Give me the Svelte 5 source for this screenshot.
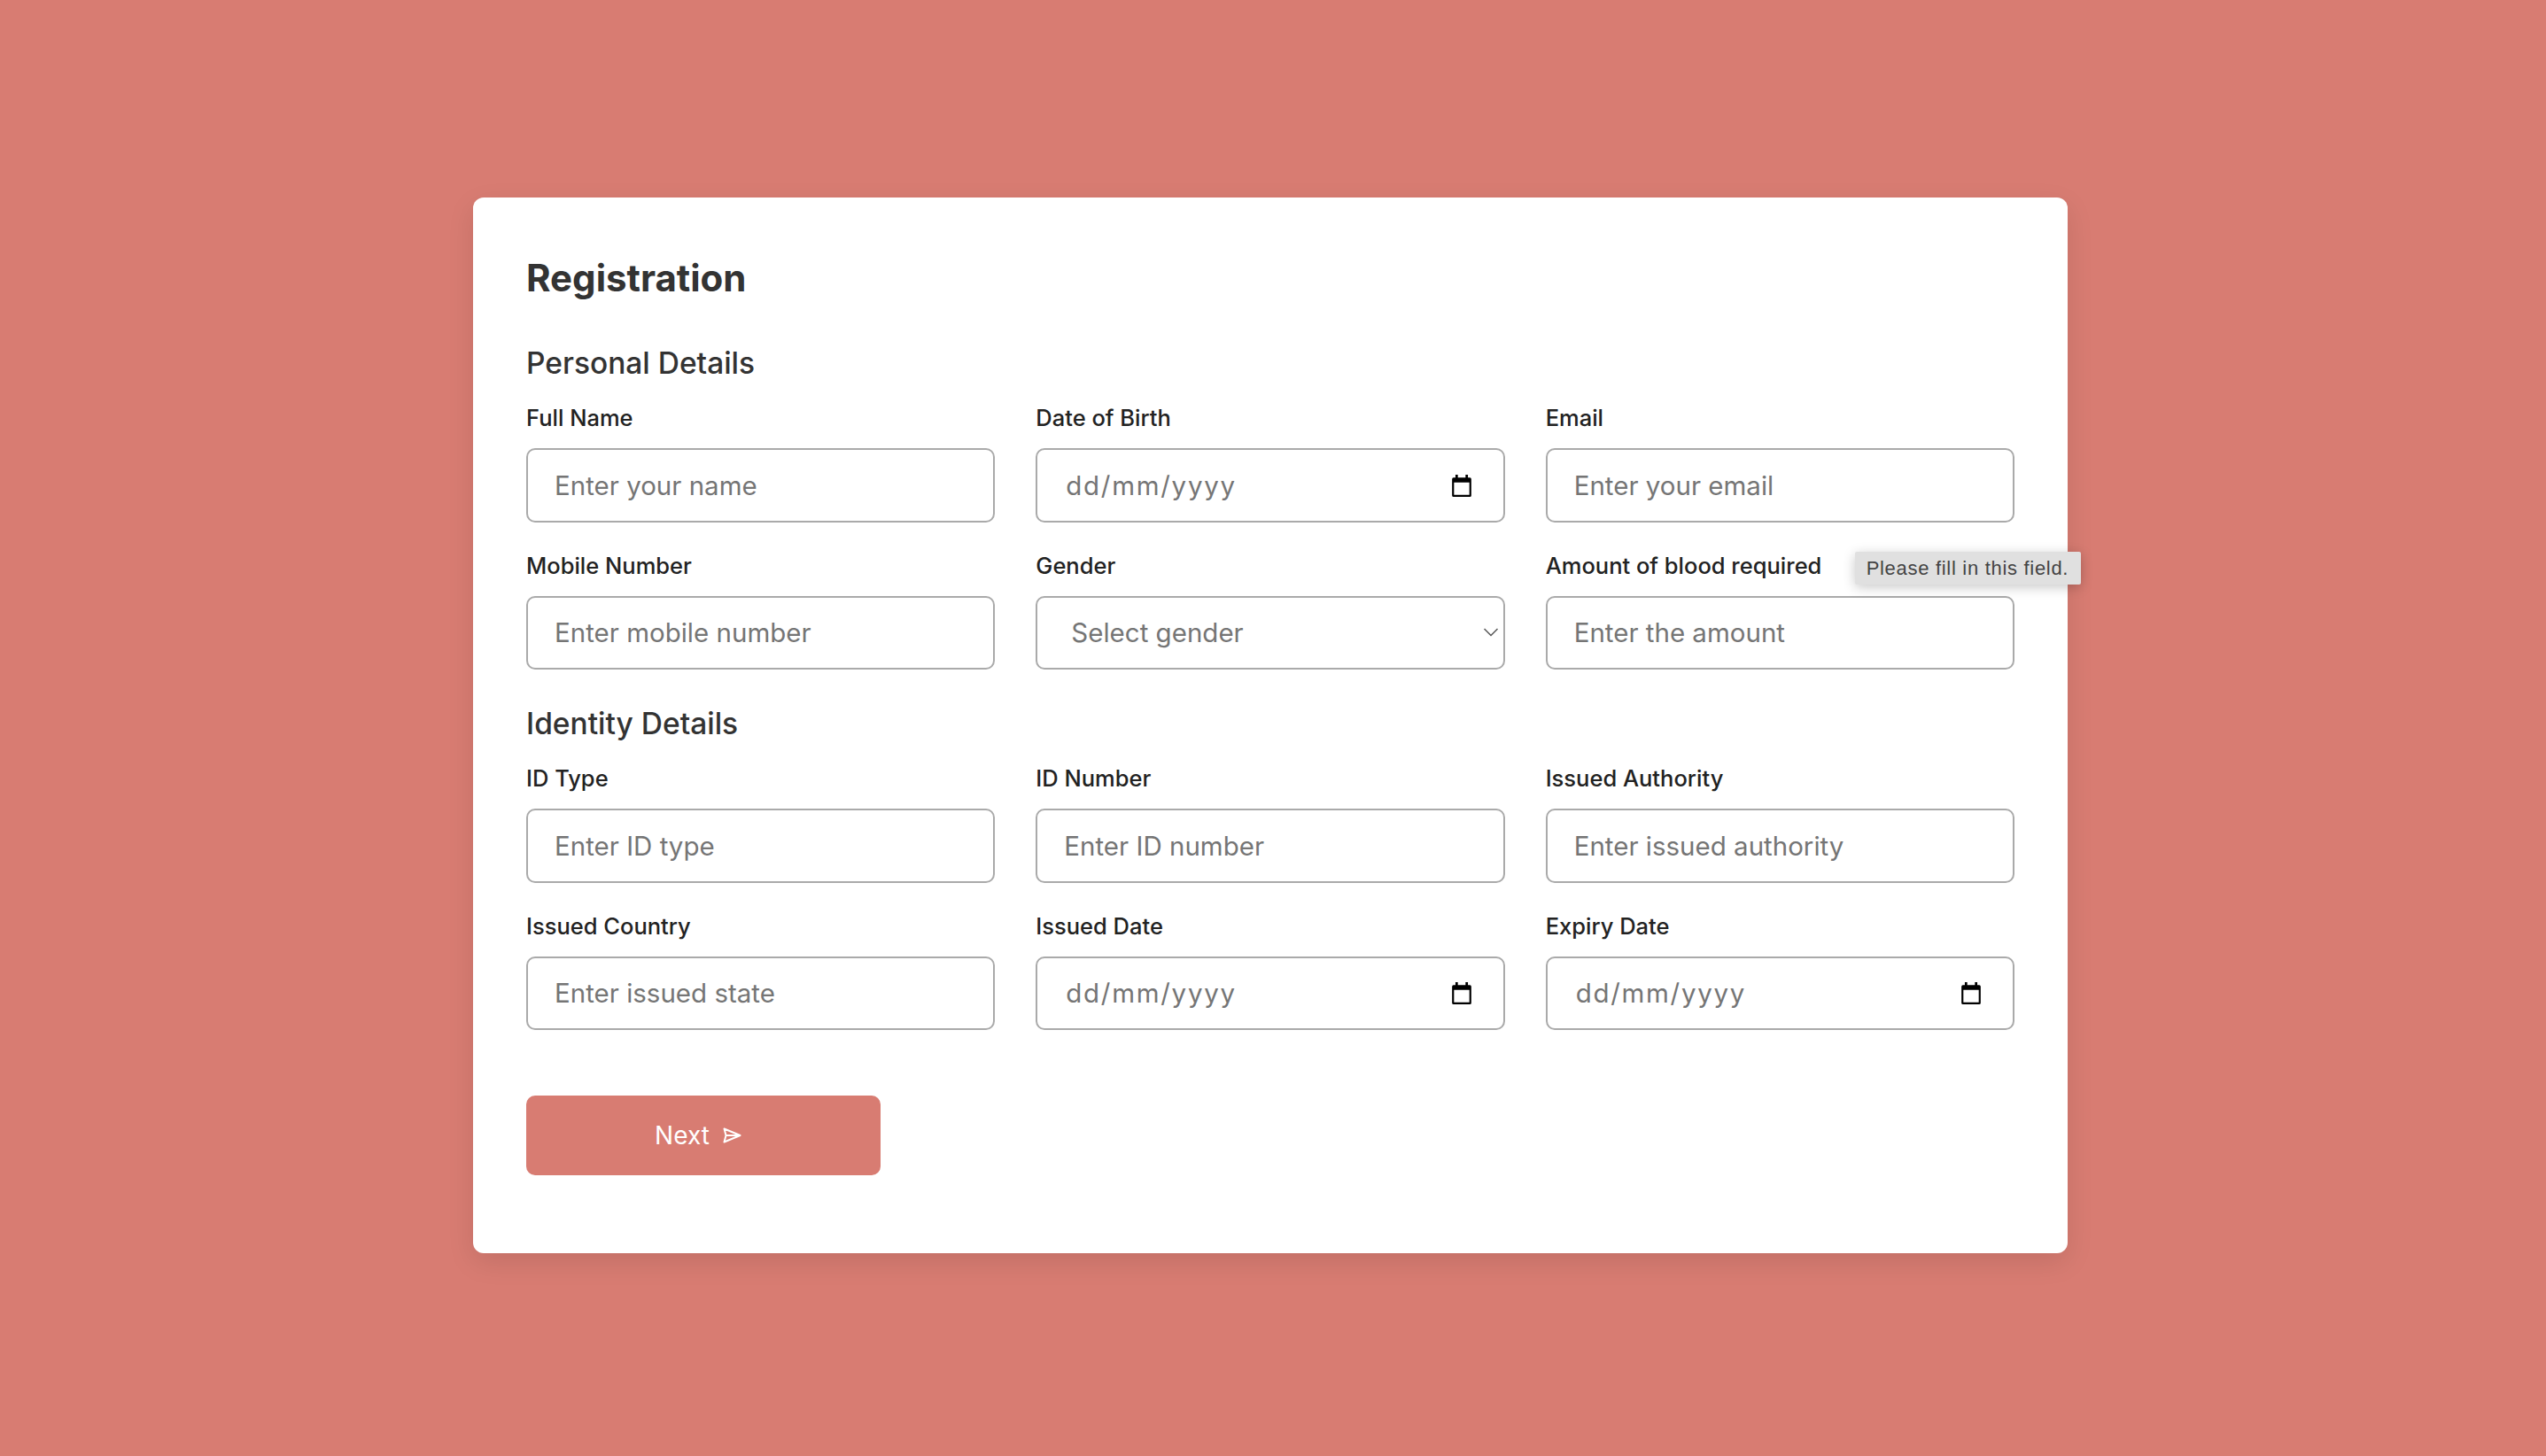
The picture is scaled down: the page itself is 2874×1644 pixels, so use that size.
<script>
  const personal = [
    { label: 'Full Name', ph: 'Enter your name' },
    { label: 'Date of Birth', date: true },
    { label: 'Email', ph: 'Enter your email' },
    { label: 'Mobile Number', ph: 'Enter mobile number' },
    { label: 'Gender', select: true },
    { label: 'Amount of blood required', ph: 'Enter the amount', tip: true }
  ];
  const identity = [
    { label: 'ID Type', ph: 'Enter ID type' },
    { label: 'ID Number', ph: 'Enter ID number' },
    { label: 'Issued Authority', ph: 'Enter issued authority' },
    { label: 'Issued Country', ph: 'Enter issued state' },
    { label: 'Issued Date', date: true },
    { label: 'Expiry Date', date: true }
  ];
</script>

{#snippet field(f)}
  <div class="field">
    <span class="label">{f.label}</span>
    {#if f.date}
      <div class="box date">
        <span class="val">dd/mm/yyyy</span>
        <svg class="cal" viewBox="0 0 24 24" width="26" height="26"><path d="M5.500 1h2.500v3h8V1h2.500v3h2A1.500 1.500 0 0 1 22 5.500v17a1.500 1.500 0 0 1-1.500 1.500h-17A1.500 1.500 0 0 1 2 22.500v-17A1.500 1.500 0 0 1 3.500 4h2z M4 9v13h16V9z" fill="#000" fill-rule="evenodd"/></svg>
      </div>
    {:else if f.select}
      <div class="box select">
        <span class="val">Select gender</span>
        <svg class="chev" viewBox="0 0 16 10" width="16" height="10"><path d="M.5 1 8 8.500 15.500 1" fill="none" stroke="#555" stroke-width="1.500"/></svg>
      </div>
    {:else}
      <div class="box"><span class="val">{f.ph}</span></div>
    {/if}
    {#if f.tip}<div class="tip">Please fill in this field.</div>{/if}
  </div>
{/snippet}

<div class="page">
  <form class="card">
    <h1>Registration</h1>
    <h2>Personal Details</h2>
    <div class="grid">
      {#each personal as f}{@render field(f)}{/each}
    </div>
    <h2 class="second">Identity Details</h2>
    <div class="grid">
      {#each identity as f}{@render field(f)}{/each}
    </div>
    <button type="button" class="next">
      Next
      <svg viewBox="0 0 22 18" width="22" height="18"><path d="M2.500 1.500 20.500 9 2.500 16.500 4.500 9zM4.500 9h16" fill="none" stroke="#fff" stroke-width="2" stroke-linejoin="round"/></svg>
    </button>
  </form>
</div>

<style>
  :global(body) { margin: 0; }
  .page {
    width: 2874px; height: 1644px; background: #d87c72;
    display: flex; align-items: flex-start;
    padding: 223px 0 0 534px; box-sizing: border-box;
    font-family: Inter, "Open Sans", sans-serif;
  }
  .card {
    width: 1800px; height: 1192px; box-sizing: border-box;
    background: #fff; border-radius: 12px; padding: 58px 60px 60px;
    box-shadow: 0 10px 30px rgba(0,0,0,.1);
    color: #333;
  }
  h1 { margin: 0; font-size: 42px; line-height: 66px; font-weight: 700; color: #333; }
  h2 { margin: 40px 0 0; font-size: 33.5px; line-height: 46px; font-weight: 500; color: #333; }
  h2.second { margin-top: 38px; }
  .grid { display: grid; grid-template-columns: repeat(3, 1fr); column-gap: 46px; row-gap: 29px; margin-top: 19px; }
  .field { position: relative; display: flex; flex-direction: column; }
  .label { font-size: 25.5px; line-height: 40px; font-weight: 500; color: #222; margin-bottom: 14px; height: 40px; }
  .box {
    height: 83.5px; box-sizing: border-box; border: 2px solid #aaa; border-radius: 10px;
    display: flex; align-items: center; padding: 0 30px; background: #fff;
  }
  .val { font-size: 29.5px; color: #757575; }
  .date { justify-content: space-between; padding-left: 32px; padding-right: 34px; }
  .date .val { letter-spacing: 1.700px; }
  .select { padding-left: 38px; padding-right: 5.500px; justify-content: space-between; }
  .next {
    margin-top: 74px; width: 400px; height: 90px; border: 0; border-radius: 10px;
    background: #d87c72; color: #fff; font: 400 28px Inter, sans-serif;
    display: flex; align-items: center; justify-content: center; gap: 14px; padding: 0 12px 0 0;
  }
  .tip {
    position: absolute; left: 349px; top: 4px; height: 37px; width: 255px; box-sizing: border-box; padding: 0 13px;
    background: #e0e0e0; color: #444; font: 22px "Liberation Sans", sans-serif; line-height: 37px;
    letter-spacing: .7px; white-space: nowrap; box-shadow: 0 3px 14px rgba(0,0,0,.22); border-radius: 2px;
  }
</style>
